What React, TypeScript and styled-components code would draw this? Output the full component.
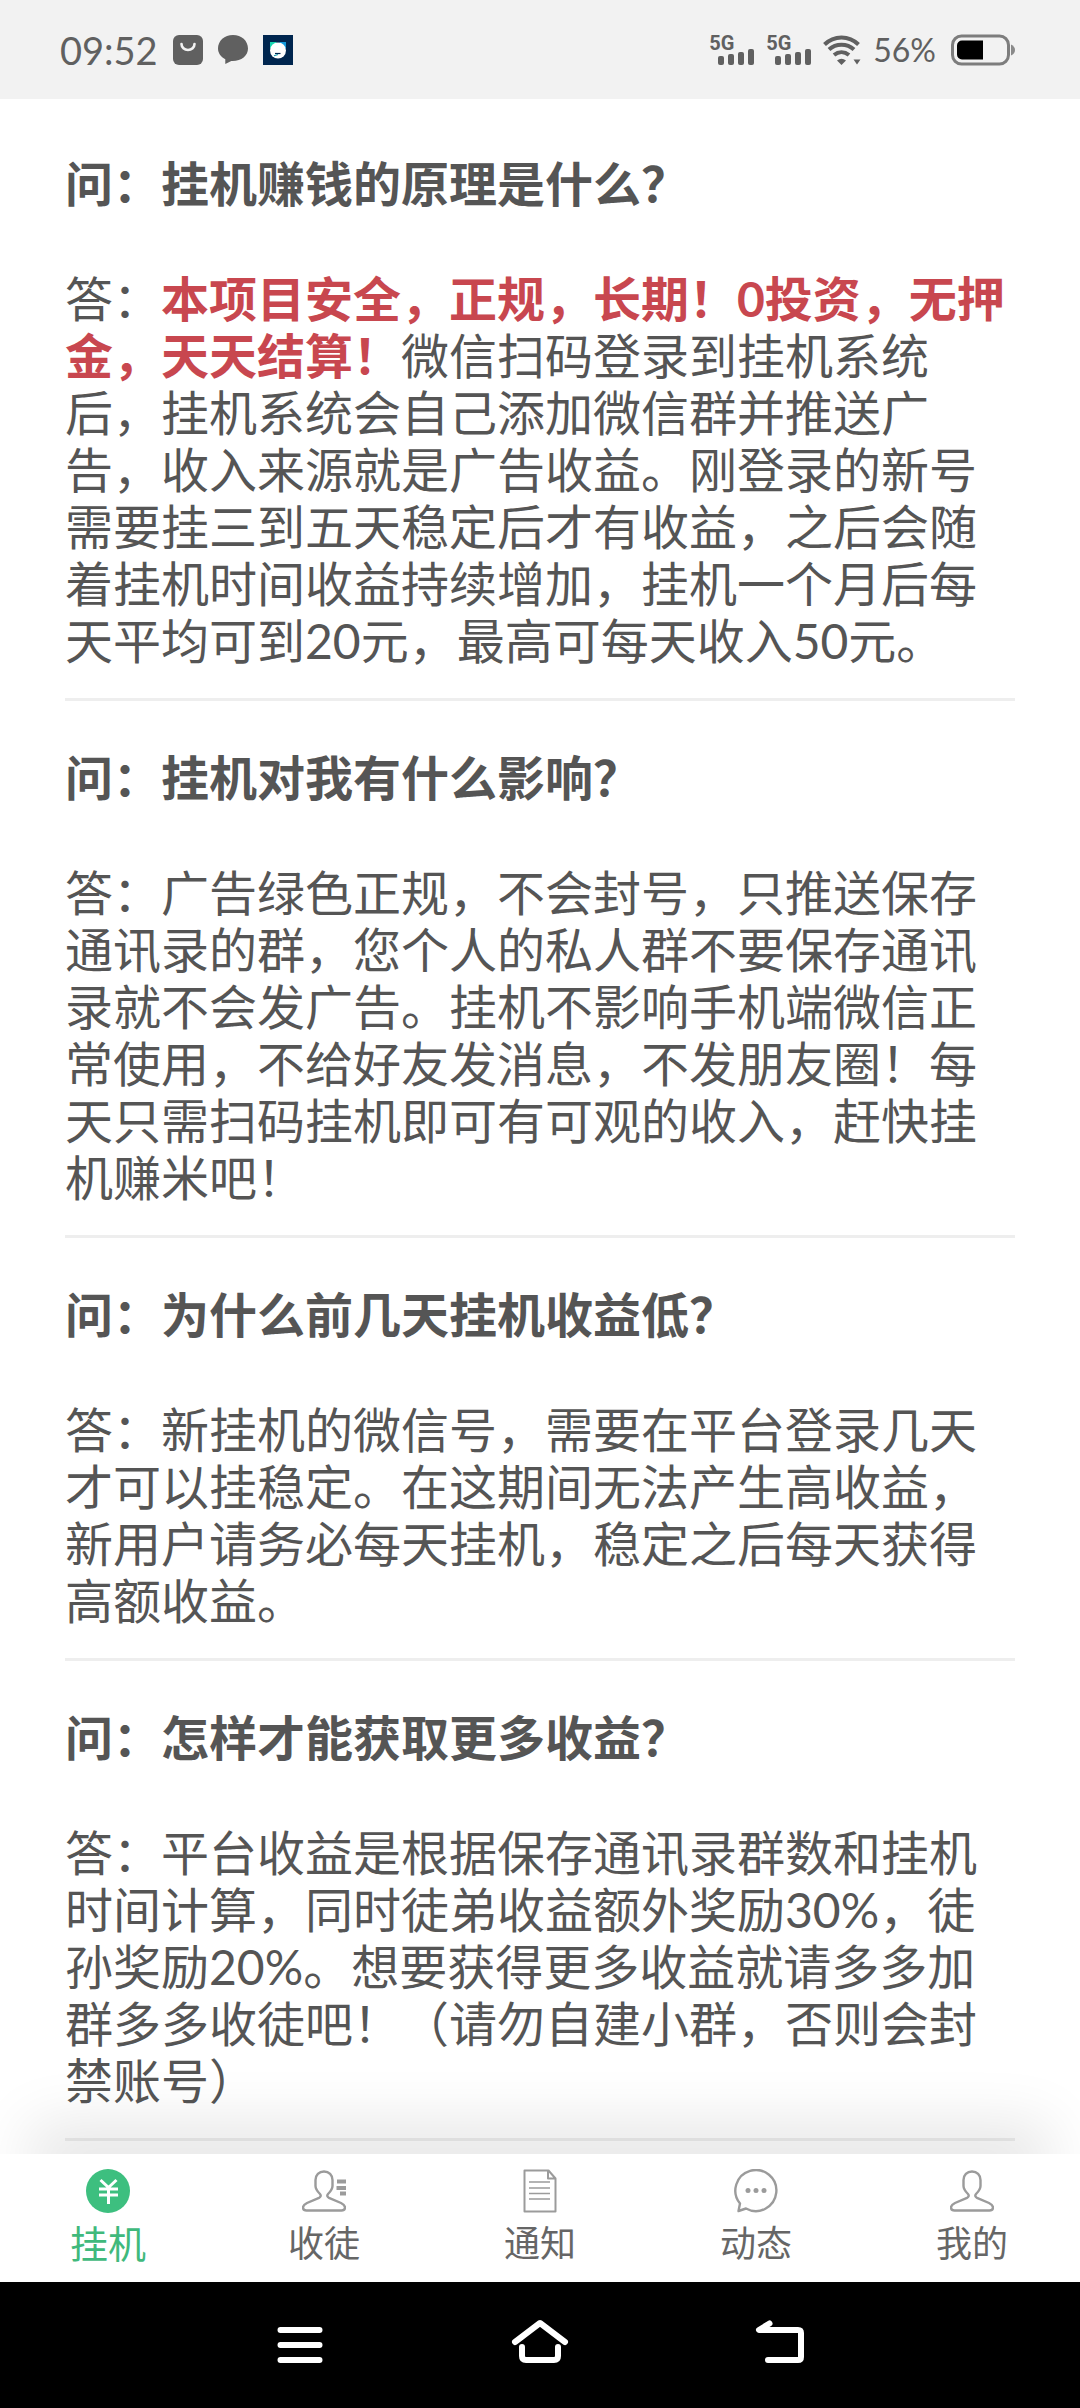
import React from "react";
import styled, { createGlobalStyle } from "styled-components";

const Global = createGlobalStyle`
  * { box-sizing: border-box; }
  body { margin: 0; background: #fff; }
  body, button {
    font-family: Lato, "Noto Sans CJK SC", sans-serif;
  }
`;

const Screen = styled.div`
  display: flex;
  flex-direction: column;
  height: 100vh;
  color: #555;
  text-spacing-trim: space-all;
`;

const StatusBar = styled.header`
  flex: none;
  display: flex;
  align-items: center;
  justify-content: space-between;
  height: 99px;
  padding: 0 64px 0 60px;
  background: #f2f2f2;
  color: #606060;
`;

const StatusGroup = styled.div<{ $gap: number }>`
  display: flex;
  align-items: center;
  gap: ${(p) => p.$gap}px;
`;

const Clock = styled.time`
  font-size: 38px;
  line-height: 48px;
`;

const Percent = styled.span`
  font-size: 32px;
  line-height: 48px;
`;

const Signal = styled.span`
  display: flex;
  align-items: flex-end;
`;

const Generation = styled.span`
  align-self: flex-start;
  width: 9px;
  font-family: Roboto, sans-serif;
  font-size: 20px;
  font-weight: 700;
  line-height: 16px;
`;

const Main = styled.main`
  flex: 1;
  min-height: 0;
  overflow-y: auto;
  scrollbar-width: none;
  padding: 8px 65px 12px;
`;

const Entry = styled.section`
  padding: 48px 0 29px;
  border-bottom: 3px solid #eee;
  font-size: 48px;
  line-height: 57px;
`;

const Question = styled.h2`
  margin: 0 0 58px;
  font-size: 48px;
  font-weight: 700;
`;

const Answer = styled.p`
  margin: 0;
`;

const Highlight = styled.strong`
  color: #c8474f;
  font-weight: 700;
`;

const TabBar = styled.nav`
  position: relative;
  flex: none;
  display: flex;
  height: 128px;
  background: #fff;
  box-shadow: 0 -60px 60px -30px rgba(0, 0, 0, 0.1);
`;

const Tab = styled.a<{ $active?: boolean }>`
  flex: 1;
  display: flex;
  flex-direction: column;
  align-items: center;
  gap: 8px;
  padding-top: 15px;
  color: ${(p) => (p.$active ? "#40b97c" : "#666")};
  font-size: ${(p) => (p.$active ? 38 : 36)}px;
  line-height: 44px;
  text-decoration: none;
`;

const SystemBar = styled.footer`
  position: relative;
  flex: none;
  display: flex;
  justify-content: center;
  gap: 160px;
  height: 126px;
  padding-top: 4px;
  background: #000;
`;

const SystemButton = styled.button`
  display: flex;
  align-items: center;
  justify-content: center;
  width: 80px;
  padding: 0;
  border: 0;
  background: none;
  color: #fff;
`;

const SignalIcon = () => (
  <Signal>
    <Generation>5G</Generation>
    <svg width="36" height="30" viewBox="0 0 36 30" fill="currentColor" aria-hidden="true">
      <rect x="0" y="21" width="6" height="9" rx="2" />
      <rect x="10" y="19" width="6" height="11" rx="2" />
      <rect x="20" y="17" width="6" height="13" rx="2" />
      <rect x="30" y="14" width="6" height="16" rx="2" />
    </svg>
  </Signal>
);

const BagIcon = () => (
  <svg width="30" height="30" viewBox="0 0 30 30" aria-hidden="true">
    <rect width="30" height="30" rx="6" fill="#606060" />
    <path d="M8.500 9a6.500 6 0 0 0 13 0" fill="none" stroke="#f2f2f2" strokeWidth="2.6" strokeLinecap="round" />
  </svg>
);

const BubbleIcon = () => (
  <svg width="30" height="30" viewBox="0 0 30 30" fill="#606060" aria-hidden="true">
    <path d="M15 0C6.500 0 0 5.800 0 13.500c0 4.500 2.800 8.500 7.300 10.800V29l6-3C23 26.500 30 21 30 13.500 30 5.800 23.500 0 15 0z" />
  </svg>
);

const BearIcon = () => (
  <svg width="30" height="30" viewBox="0 0 30 30" aria-hidden="true">
    <rect width="30" height="30" fill="#00264f" />
    <path d="M7 7h7l-7 7z" fill="#16d3b0" />
    <path d="M23 7h-7l7 7z" fill="#1299dc" />
    <circle cx="15" cy="15.500" r="8" fill="#fff" />
    <path d="M12 18.500h5.500" stroke="#00264f" strokeWidth="1.200" />
    <path d="M15 19.500l-4 1.200" stroke="#1299b0" strokeWidth="1.200" />
  </svg>
);

const WifiIcon = () => (
  <svg width="38" height="30" viewBox="0 0 38 30" aria-hidden="true">
    <g fill="none" stroke="#606060" strokeWidth="4">
      <path d="M1.500 9.500C11 0 26 0 35.500 9.500" />
      <path d="M6 14.500c7-6.500 18-6.500 25 0" />
      <path d="M11 20c4.500-3.700 10.500-3.700 15 0" />
    </g>
    <path d="M14 25.500q4.500-3.500 9 0L18.500 30z" fill="#606060" />
    <path d="M30.500 24.500h7l-3.500 5z" fill="#606060" />
  </svg>
);

const BatteryIcon = () => (
  <svg width="68" height="32" viewBox="-4 0 68 32" aria-hidden="true">
    <rect x="0.500" y="2" width="56" height="28" rx="9" fill="none" stroke="#7d7d7d" strokeWidth="3" />
    <path d="M10 6.500h21v19H10a5 5 0 0 1-5-5v-9a5 5 0 0 1 5-5z" fill="#000" />
    <path d="M59 10.500q4 2 4 5.500t-4 5.500z" fill="#8a8a8a" />
  </svg>
);

const YuanIcon = () => (
  <svg width="44" height="44" viewBox="0 0 44 44" aria-hidden="true">
    <circle cx="22" cy="22" r="22" fill="#3dbf7f" />
    <path d="M14.500 11l8 7.500 8-7.500M13 20h19M13 26h19M22.500 18v17" fill="none" stroke="#fff" strokeWidth="3" />
  </svg>
);

const personPath =
  "M22 2.500c-5 0-8.500 3.500-8.500 8.500v6c0 3.500 2.500 6 4.500 8 1.300 1.500.7 3-1 3.800L5 34c-3 1.500-4 2.500-4 4.500 0 2 1.500 3 3.500 3h35c2 0 3.500-1 3.500-3 0-2-1-3-4-4.500l-12-5.200c-1.700-.8-2.300-2.300-1-3.800 2-2 4.500-4.500 4.500-8v-6c0-5-3.500-8.500-8.500-8.500z";

const PersonIcon = ({ lines }: { lines?: boolean }) => (
  <svg width="44" height="44" viewBox="0 0 44 44" fill="none" stroke="#9b9b9b" strokeWidth="2.400" aria-hidden="true">
    <path d={personPath} />
    {lines && <path d="M35 12.500h9M34.500 19h9.500M38 24.500h6" strokeWidth="4" />}
  </svg>
);

const NoteIcon = () => (
  <svg width="44" height="44" viewBox="0 0 44 44" fill="none" stroke="#9b9b9b" strokeWidth="2" strokeLinejoin="round" aria-hidden="true">
    <path d="M6.500 1.500h24l7 8v33h-31zM30 1.500v8h7.500" />
    <path d="M11 13h21M11 19h21M11 24.500h21M11 30h21" strokeWidth="1.600" />
  </svg>
);

const ChatIcon = () => (
  <svg width="44" height="44" viewBox="0 0 44 44" fill="none" stroke="#9b9b9b" strokeWidth="2.400" aria-hidden="true">
    <path d="M6 34.500A20.500 20.500 0 1 1 12 39.500L4.500 42z" strokeLinejoin="round" />
    <g fill="#9b9b9b" stroke="none">
      <circle cx="14" cy="21.500" r="2.500" />
      <circle cx="22" cy="21.500" r="2.500" />
      <circle cx="30" cy="21.500" r="2.500" />
    </g>
  </svg>
);

const entries: { question: string; highlight?: string; answer: string }[] = [
  {
    question: "挂机赚钱的原理是什么？",
    highlight: "本项目安全，正规，长期！0投资，无押金，天天结算！",
    answer:
      "微信扫码登录到挂机系统后，挂机系统会自己添加微信群并推送广告，收入来源就是广告收益。刚登录的新号需要挂三到五天稳定后才有收益，之后会随着挂机时间收益持续增加，挂机一个月后每天平均可到20元，最高可每天收入50元。",
  },
  {
    question: "挂机对我有什么影响？",
    answer:
      "广告绿色正规，不会封号，只推送保存通讯录的群，您个人的私人群不要保存通讯录就不会发广告。挂机不影响手机端微信正常使用，不给好友发消息，不发朋友圈！每天只需扫码挂机即可有可观的收入，赶快挂机赚米吧！",
  },
  {
    question: "为什么前几天挂机收益低？",
    answer:
      "新挂机的微信号，需要在平台登录几天才可以挂稳定。在这期间无法产生高收益，新用户请务必每天挂机，稳定之后每天获得高额收益。",
  },
  {
    question: "怎样才能获取更多收益？",
    answer:
      "平台收益是根据保存通讯录群数和挂机时间计算，同时徒弟收益额外奖励30%，徒孙奖励20%。想要获得更多收益就请多多加群多多收徒吧！（请勿自建小群，否则会封禁账号）",
  },
];

const tabs = [
  { label: "挂机", icon: <YuanIcon />, active: true },
  { label: "收徒", icon: <PersonIcon lines /> },
  { label: "通知", icon: <NoteIcon /> },
  { label: "动态", icon: <ChatIcon /> },
  { label: "我的", icon: <PersonIcon /> },
];

export default function App() {
  return (
    <Screen lang="zh-CN">
      <Global />
      <StatusBar>
        <StatusGroup $gap={15}>
          <Clock>09:52</Clock>
          <BagIcon />
          <BubbleIcon />
          <BearIcon />
        </StatusGroup>
        <StatusGroup $gap={12}>
          <SignalIcon />
          <SignalIcon />
          <WifiIcon />
          <Percent>56%</Percent>
          <BatteryIcon />
        </StatusGroup>
      </StatusBar>
      <Main>
        {entries.map((e) => (
          <Entry key={e.question}>
            <Question>{`问：${e.question}`}</Question>
            {e.highlight ? (
              <Answer>
                答：<Highlight>{e.highlight}</Highlight>
                {e.answer}
              </Answer>
            ) : (
              <Answer>{`答：${e.answer}`}</Answer>
            )}
          </Entry>
        ))}
      </Main>
      <TabBar>
        {tabs.map((t) => (
          <Tab key={t.label} href="#" $active={t.active}>
            {t.icon}
            {t.label}
          </Tab>
        ))}
      </TabBar>
      <SystemBar>
        <SystemButton aria-label="菜单">
          <svg width="46" height="56" viewBox="0 0 46 56" stroke="currentColor" strokeWidth="6" strokeLinecap="round">
            <path d="M3.500 11h39M3.500 26h39M3.500 41h39" />
          </svg>
        </SystemButton>
        <SystemButton aria-label="主页">
          <svg width="58" height="56" viewBox="0 0 58 56" fill="none" stroke="currentColor" strokeWidth="6" strokeLinecap="round" strokeLinejoin="round">
            <path d="M4 23L29 4l25 19M11 28v9q0 4 4 4h28q4 0 4-4v-9" />
          </svg>
        </SystemButton>
        <SystemButton aria-label="返回">
          <svg width="50" height="56" viewBox="0 0 50 56" fill="none" stroke="currentColor" strokeWidth="6" strokeLinecap="round" strokeLinejoin="round">
            <path d="M14.500 4.500L4 11h39q3 0 3 3v24q0 3-3 3H13" />
          </svg>
        </SystemButton>
      </SystemBar>
    </Screen>
  );
}
